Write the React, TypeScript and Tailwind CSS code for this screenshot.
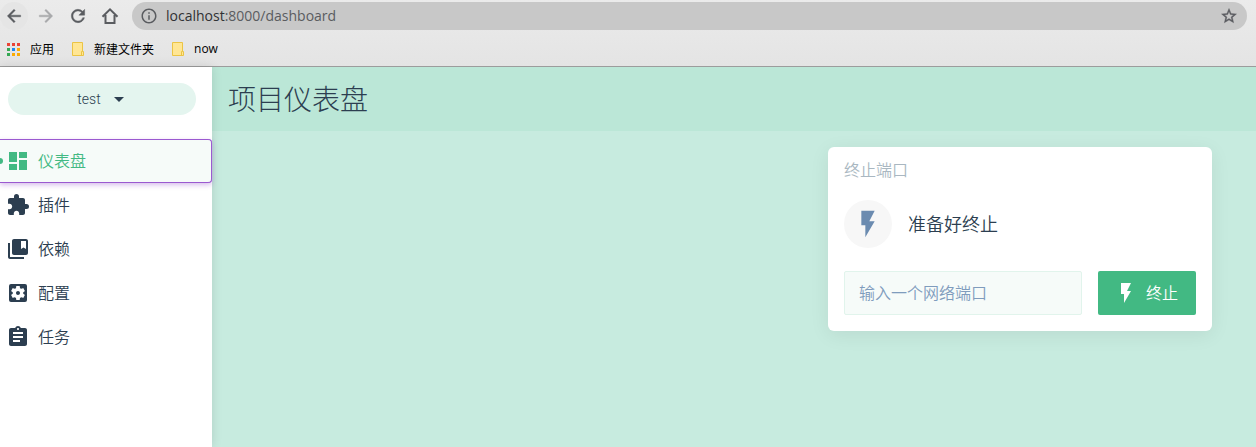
import type { ReactNode } from 'react';
import type { IconType } from 'react-icons';
import {
  MdArrowBack,
  MdArrowDropDown,
  MdArrowForward,
  MdAssignment,
  MdCollectionsBookmark,
  MdDashboard,
  MdExtension,
  MdFlashOn,
  MdInfoOutline,
  MdRefresh,
  MdSettingsApplications,
  MdStarBorder,
} from 'react-icons/md';

const NAV_ITEMS: { label: string; href: string; icon: IconType; active?: boolean }[] = [
  { label: '仪表盘', href: '#dashboard', icon: MdDashboard, active: true },
  { label: '插件', href: '#plugins', icon: MdExtension },
  { label: '依赖', href: '#dependencies', icon: MdCollectionsBookmark },
  { label: '配置', href: '#configurations', icon: MdSettingsApplications },
  { label: '任务', href: '#tasks', icon: MdAssignment },
];

const APP_DOTS = [
  'bg-[#ea4335]', 'bg-[#ea4335]', 'bg-[#ea4335]',
  'bg-[#34a853]', 'bg-[#1e88f0]', 'bg-[#fbab05]',
  'bg-[#34a853]', 'bg-[#fbab05]', 'bg-[#fbab05]',
];

// The icon set puts an empty bounds path first, so only the last path gets the extra weight
const BOLD_ICON = '[&>path:last-child]:stroke-current [&>path:last-child]:stroke-[0.5]';

function FolderIcon() {
  return (
    <svg width="12" height="14" viewBox="0 0 12 14" fill="none" stroke="#ebc444" aria-hidden="true">
      <path d="M.5.5h10v9h1v4H.5z" fill="#ffe694" />
      <path d="M9.5 13V9.500h1" />
    </svg>
  );
}

function HomeIcon() {
  return (
    <svg width="18" height="18" viewBox="0 0 18 18" fill="none" stroke="#5a5c60" strokeWidth="2" aria-hidden="true">
      <path d="M1.500 9.800 9 2.300l7.500 7.500M4.500 8v8h9V8" />
    </svg>
  );
}

function ToolbarButton({ label, className = '', children }: { label: string; className?: string; children: ReactNode }) {
  return (
    <button
      type="button"
      aria-label={label}
      className={`flex size-7 shrink-0 items-center justify-center rounded-full text-[#5a5c60] ${className}`}
    >
      {children}
    </button>
  );
}

function BrowserBar() {
  return (
    <header className="border-b border-[#9c9c9c] bg-linear-to-b from-[#ebebeb] to-[#e4e4e4]">
      <div className="flex h-8 items-center gap-1 pr-[9px]">
        <ToolbarButton label="后退" className="bg-[#e5e5e5]">
          <MdArrowBack size={20} className={BOLD_ICON} />
        </ToolbarButton>
        <ToolbarButton label="前进" className="opacity-45">
          <MdArrowForward size={20} className={BOLD_ICON} />
        </ToolbarButton>
        <ToolbarButton label="刷新">
          <MdRefresh size={20} className={BOLD_ICON} />
        </ToolbarButton>
        <ToolbarButton label="主页">
          <HomeIcon />
        </ToolbarButton>
        <div className="ml-1 flex h-7 flex-1 items-center gap-2 rounded-full bg-[#c8c8c8] pr-[9px] pl-2 text-[#5a5c60]">
          <MdInfoOutline size={18} className="shrink-0" />
          <p className="flex-1 font-['Open_Sans','Noto_Sans',sans-serif] text-sm">
            <span className="text-[#303134]">localhost</span>:8000/dashboard
          </p>
          <button type="button" aria-label="收藏">
            <MdStarBorder size={18} className={BOLD_ICON} />
          </button>
        </div>
      </div>

      {/* Bookmarks */}
      <nav className="flex h-[34px] items-center gap-[18px] px-[7px] text-xs text-black">
        <a href="#apps" className="flex items-center gap-[10px]">
          <span className="grid grid-cols-3 gap-[2px]">
            {APP_DOTS.map((color, i) => (
              <span key={i} className={`size-[3px] ${color}`} />
            ))}
          </span>
          应用
        </a>
        <a href="#folder" className="flex items-center gap-[10px]">
          <FolderIcon />
          新建文件夹
        </a>
        <a href="#now" className="flex items-center gap-[10px] font-['Open_Sans','Noto_Sans',sans-serif]">
          <FolderIcon />
          now
        </a>
      </nav>
    </header>
  );
}

function Sidebar() {
  return (
    <aside className="z-10 w-[212px] shrink-0 bg-white shadow-[0_0_10px_rgba(0,0,0,0.12)]">
      <div className="pt-4 pr-4 pb-6 pl-2">
        <button
          type="button"
          className="flex h-8 w-full items-center justify-center gap-[6px] rounded-full bg-[#e4f5ef] pl-1 font-[Roboto,sans-serif] text-sm"
        >
          test
          <MdArrowDropDown size={24} />
        </button>
      </div>

      <nav>
        {NAV_ITEMS.map(({ label, href, icon: Icon, active }) => (
          <a
            key={href}
            href={href}
            aria-current={active ? 'page' : undefined}
            className={`relative flex h-11 items-center gap-2 pl-[6px] ${
              active
                ? 'rounded-r-sm bg-[#f6fbf9] text-[#42b983] shadow-[inset_-1px_0_#9b59d0,inset_0_1px_#9b59d0,inset_0_-1px_#9b59d0,0_2px_5px_rgba(155,89,208,0.4)]'
                : ''
            }`}
          >
            {active && <span className="absolute left-0 h-[6px] w-[3px] rounded-r-full bg-[#42b983]" />}
            <Icon size={24} />
            <span className="pb-[2px]">{label}</span>
          </a>
        ))}
      </nav>
    </aside>
  );
}

function KillPortCard() {
  return (
    <section className="w-96 rounded-md bg-white px-4 pt-[10px] pb-4 shadow-[0_4px_20px_rgba(0,0,0,0.07)]">
      <h2 className="font-[350] text-[#a9b7c1]">终止端口</h2>

      <div className="mt-[19px] flex items-center gap-4">
        <div className="flex size-12 items-center justify-center rounded-full bg-[#f7f7f7] text-[#6b8bb0]">
          <MdFlashOn size={32} />
        </div>
        <p className="pb-[2px] text-lg">准备好终止</p>
      </div>

      <form className="mt-[23px] flex gap-4" onSubmit={(e) => e.preventDefault()}>
        <input
          type="text"
          aria-label="网络端口"
          placeholder="输入一个网络端口"
          className="h-11 min-w-0 flex-1 rounded-xs border border-[#e1f4ec] bg-[#f6fbf9] px-[14px] pb-[2px] placeholder:text-[#7f9cbd]"
        />
        <button
          type="submit"
          className="flex h-11 items-center gap-2 rounded-xs bg-[#42b983] pr-[18px] pl-4 text-white"
        >
          <MdFlashOn size={24} />
          <span className="pb-[2px]">终止</span>
        </button>
      </form>
    </section>
  );
}

export default function App() {
  return (
    <div className="flex min-h-screen flex-col font-['Noto_Sans_CJK_SC',sans-serif] text-base text-[#2c3e50]">
      <BrowserBar />
      <div className="flex flex-1 font-[350]">
        <Sidebar />
        <main className="flex-1 bg-[#c7ebdf]">
          <div className="flex h-16 items-center bg-[#bbe7d7] px-4">
            <h1 className="pb-[2px] text-[28px] font-light">项目仪表盘</h1>
          </div>
          <div className="flex justify-end py-4 pr-11 pl-4">
            <KillPortCard />
          </div>
        </main>
      </div>
    </div>
  );
}
